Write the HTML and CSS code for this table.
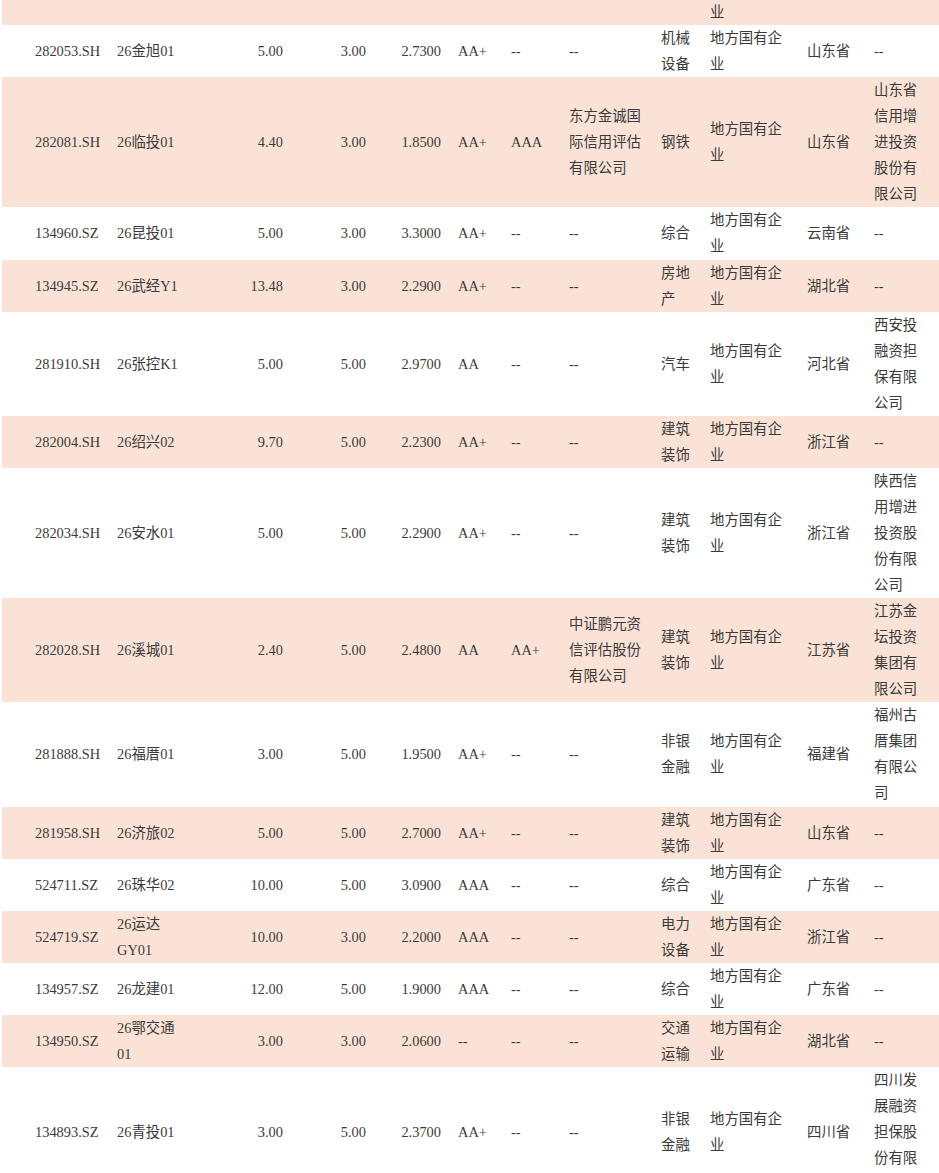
FILE: index.html
```html
<!DOCTYPE html>
<html lang="zh-CN">
<head>
<meta charset="utf-8">
<title>债券发行列表</title>
<link rel="stylesheet" href="styles.css">
</head>
<body>
<table class="bonds">
  <tbody>
    <tr class="partial"><td></td><td></td><td></td><td></td><td></td><td></td><td></td><td></td><td></td><td>地方国有企业</td><td></td><td></td></tr>
    <tr><td>282053.SH</td><td>26金旭01</td><td>5.00</td><td>3.00</td><td>2.7300</td><td>AA+</td><td>--</td><td>--</td><td>机械设备</td><td>地方国有企业</td><td>山东省</td><td>--</td></tr>
    <tr><td>282081.SH</td><td>26临投01</td><td>4.40</td><td>3.00</td><td>1.8500</td><td>AA+</td><td>AAA</td><td>东方金诚国际信用评估有限公司</td><td>钢铁</td><td>地方国有企业</td><td>山东省</td><td>山东省信用增进投资股份有限公司</td></tr>
    <tr><td>134960.SZ</td><td>26昆投01</td><td>5.00</td><td>3.00</td><td>3.3000</td><td>AA+</td><td>--</td><td>--</td><td>综合</td><td>地方国有企业</td><td>云南省</td><td>--</td></tr>
    <tr><td>134945.SZ</td><td>26武经Y1</td><td>13.48</td><td>3.00</td><td>2.2900</td><td>AA+</td><td>--</td><td>--</td><td>房地产</td><td>地方国有企业</td><td>湖北省</td><td>--</td></tr>
    <tr><td>281910.SH</td><td>26张控K1</td><td>5.00</td><td>5.00</td><td>2.9700</td><td>AA</td><td>--</td><td>--</td><td>汽车</td><td>地方国有企业</td><td>河北省</td><td>西安投融资担保有限公司</td></tr>
    <tr><td>282004.SH</td><td>26绍兴02</td><td>9.70</td><td>5.00</td><td>2.2300</td><td>AA+</td><td>--</td><td>--</td><td>建筑装饰</td><td>地方国有企业</td><td>浙江省</td><td>--</td></tr>
    <tr><td>282034.SH</td><td>26安水01</td><td>5.00</td><td>5.00</td><td>2.2900</td><td>AA+</td><td>--</td><td>--</td><td>建筑装饰</td><td>地方国有企业</td><td>浙江省</td><td>陕西信用增进投资股份有限公司</td></tr>
    <tr><td>282028.SH</td><td>26溪城01</td><td>2.40</td><td>5.00</td><td>2.4800</td><td>AA</td><td>AA+</td><td>中证鹏元资信评估股份有限公司</td><td>建筑装饰</td><td>地方国有企业</td><td>江苏省</td><td>江苏金坛投资集团有限公司</td></tr>
    <tr><td>281888.SH</td><td>26福厝01</td><td>3.00</td><td>5.00</td><td>1.9500</td><td>AA+</td><td>--</td><td>--</td><td>非银金融</td><td>地方国有企业</td><td>福建省</td><td>福州古厝集团有限公司</td></tr>
    <tr><td>281958.SH</td><td>26济旅02</td><td>5.00</td><td>5.00</td><td>2.7000</td><td>AA+</td><td>--</td><td>--</td><td>建筑装饰</td><td>地方国有企业</td><td>山东省</td><td>--</td></tr>
    <tr><td>524711.SZ</td><td>26珠华02</td><td>10.00</td><td>5.00</td><td>3.0900</td><td>AAA</td><td>--</td><td>--</td><td>综合</td><td>地方国有企业</td><td>广东省</td><td>--</td></tr>
    <tr><td>524719.SZ</td><td>26运达GY01</td><td>10.00</td><td>3.00</td><td>2.2000</td><td>AAA</td><td>--</td><td>--</td><td>电力设备</td><td>地方国有企业</td><td>浙江省</td><td>--</td></tr>
    <tr><td>134957.SZ</td><td>26龙建01</td><td>12.00</td><td>5.00</td><td>1.9000</td><td>AAA</td><td>--</td><td>--</td><td>综合</td><td>地方国有企业</td><td>广东省</td><td>--</td></tr>
    <tr><td>134950.SZ</td><td>26鄂交通01</td><td>3.00</td><td>3.00</td><td>2.0600</td><td>--</td><td>--</td><td>--</td><td>交通运输</td><td>地方国有企业</td><td>湖北省</td><td>--</td></tr>
    <tr><td>134893.SZ</td><td>26青投01</td><td>3.00</td><td>5.00</td><td>2.3700</td><td>AA+</td><td>--</td><td>--</td><td>非银金融</td><td>地方国有企业</td><td>四川省</td><td>四川发展融资担保股份有限公司</td></tr>
  </tbody>
</table>
</body>
</html>
```

FILE: styles.css
```css
html, body {
  margin: 0;
  padding: 0;
  background: #ffffff;
}

body {
  padding-left: 2px;
  font-family: "Liberation Serif", "Noto Sans CJK SC", serif;
  font-size: 14.4px;
  line-height: 26.05px;
  color: #3a3a3a;
  text-autospace: ideograph-alpha ideograph-numeric;
}

.bonds {
  width: 937px;
  table-layout: fixed;
  border-collapse: collapse;
  border-spacing: 0;
  margin-top: -27px;
}

.bonds tr:nth-child(odd) {
  background: #fae3d6;
}

.bonds td {
  box-sizing: border-box;
  padding: 0 8px;
  vertical-align: middle;
  text-align: left;
  word-break: normal;
  overflow-wrap: anywhere;
}

.bonds td:nth-child(1)  { width: 107px; padding-left: 33px; white-space: nowrap; }
.bonds td:nth-child(2)  { width: 81px; padding-right: 7px; }
.bonds td:nth-child(3)  { width: 101px; text-align: right; }
.bonds td:nth-child(4)  { width: 83px; text-align: right; }
.bonds td:nth-child(5)  { width: 75px; text-align: right; }
.bonds td:nth-child(6)  { width: 54px; padding-left: 9px; padding-right: 2px; }
.bonds td:nth-child(7)  { width: 58px; }
.bonds td:nth-child(8)  { width: 92px; }
.bonds td:nth-child(9)  { width: 49px; }
.bonds td:nth-child(10) { width: 97px; }
.bonds td:nth-child(11) { width: 67px; }
.bonds td:nth-child(12) { width: 73px; padding-right: 17px; }

.bonds .partial td {
  vertical-align: bottom;
}
```
